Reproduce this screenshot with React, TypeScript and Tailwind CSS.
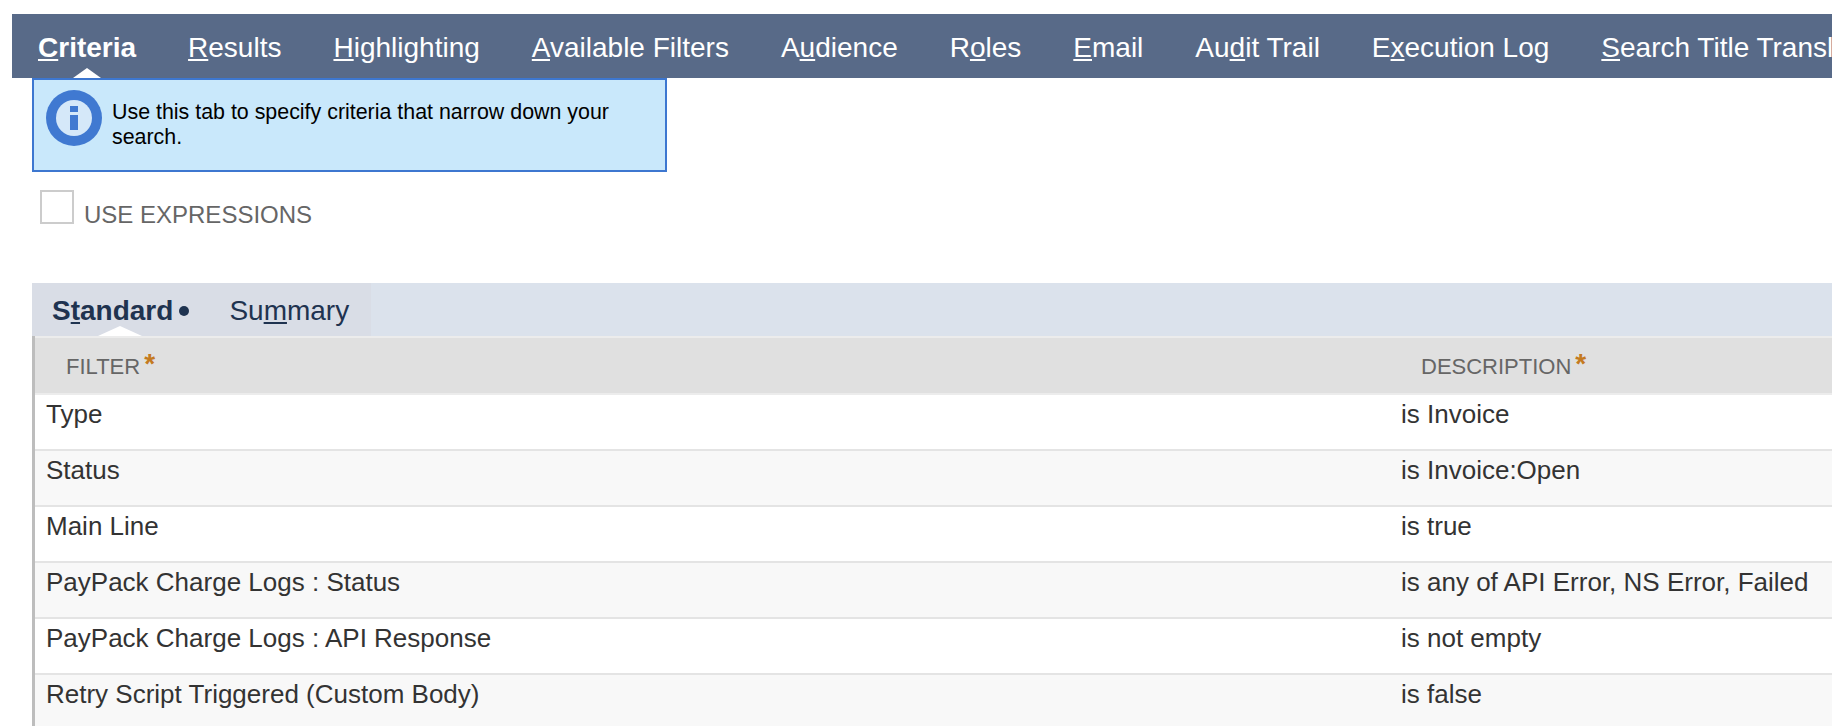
const tabs: [string, string, string][] = [
  ["", "R", "esults"],
  ["", "H", "ighlighting"],
  ["", "A", "vailable Filters"],
  ["A", "u", "dience"],
  ["R", "o", "les"],
  ["", "E", "mail"],
  ["Au", "d", "it Trail"],
  ["E", "x", "ecution Log"],
  ["", "S", "earch Title Translation"],
]

const rows = [
  ["Type", "is Invoice"],
  ["Status", "is Invoice:Open"],
  ["Main Line", "is true"],
  ["PayPack Charge Logs : Status", "is any of API Error, NS Error, Failed"],
  ["PayPack Charge Logs : API Response", "is not empty"],
  ["Retry Script Triggered (Custom Body)", "is false"],
]

function InfoIcon() {
  return (
    <svg width="56" height="56" viewBox="0 0 56 56" className="shrink-0">
      <circle cx="28" cy="28" r="28" fill="#4079d1" />
      <circle cx="28" cy="28" r="18" fill="#d5e8f9" />
      <rect x="24" y="16" width="8" height="6" fill="#4079d1" />
      <rect x="24" y="25" width="8" height="15" fill="#4079d1" />
    </svg>
  )
}

function Required() {
  return <span className="ml-[4px] -translate-y-[3px] text-[28px] leading-none font-bold text-[#c47a20]">*</span>
}

export default function App() {
  return (
    <div className="h-[726px] w-[1832px] overflow-hidden bg-white pt-[14px] font-['Liberation_Sans',Arial,sans-serif]">
      <nav className="ml-[12px] flex h-[64px] items-center whitespace-nowrap bg-[#586a88] pt-[3px] text-[28px] text-white">
        <a className="relative flex h-full items-center px-[26px] font-bold">
          <span>
            <u>C</u>riteria
          </span>
          <span className="absolute bottom-0 left-[61px] h-0 w-0 border-x-[14px] border-b-[10px] border-x-transparent border-b-white" />
        </a>
        {tabs.map(([before, key, after]) => (
          <a key={key + after} className="px-[26px]">
            {before}
            <u>{key}</u>
            {after}
          </a>
        ))}
      </nav>

      <div className="ml-[32px] flex h-[94px] w-[635px] gap-[10px] border-2 border-[#3d77d0] bg-[#c9e8fb] pl-[12px] pt-[10px]">
        <InfoIcon />
        <p className="w-[530px] pt-[10px] text-[21.4px] leading-[25px] text-black">
          Use this tab to specify criteria that narrow down your search.
        </p>
      </div>

      <label className="ml-[40px] mt-[18px] flex items-start gap-[10px] text-[24px] leading-[28px] text-[#666666]">
        <span className="h-[34px] w-[34px] border-2 border-[#cccccc] bg-white" />
        <span className="pt-[11px]">USE EXPRESSIONS</span>
      </label>

      <div className="ml-[32px] mt-[54px]">
        <div className="flex h-[53px] bg-[#dbe2ec] text-[28px] text-[#1f3350]">
          <div className="flex w-[339px] items-center bg-[#d9dde6] pt-[3px]">
            <a className="relative ml-[20px] flex h-full items-center font-bold">
              <span>
                S<u>t</u>andard
              </span>
              <span className="ml-[6px] h-[10px] w-[10px] rounded-full bg-[#1f3350]" />
              <span className="absolute bottom-0 left-[46px] h-0 w-0 border-x-[22px] border-b-[10px] border-x-transparent border-b-white" />
            </a>
            <a className="ml-[40px]">
              Su<u>m</u>mary
            </a>
          </div>
        </div>

        <div className="border-l-[3px] border-[#bdbdbd]">
          <div className="grid h-[59px] grid-cols-[1354px_1fr] border-y-2 border-[#ececec] bg-[#e0e0e0] pt-[2px] text-[22px] text-[#666666]">
            <div className="flex items-center pl-[31px]">
              FILTER
              <Required />
            </div>
            <div className="flex items-center pl-[32px]">
              DESCRIPTION
              <Required />
            </div>
          </div>
          {rows.map(([filter, description], i) => (
            <div
              key={filter}
              className={`grid h-[56px] grid-cols-[1354px_1fr] border-b-2 border-[#e4e4e4] pt-[4px] text-[26px] leading-[30px] text-[#333333] ${
                i % 2 === 0 ? "bg-white" : "bg-[#f8f8f8]"
              }`}
            >
              <div className="pl-[11px]">{filter}</div>
              <div className="pl-[12px]">{description}</div>
            </div>
          ))}
        </div>
      </div>
    </div>
  )
}
